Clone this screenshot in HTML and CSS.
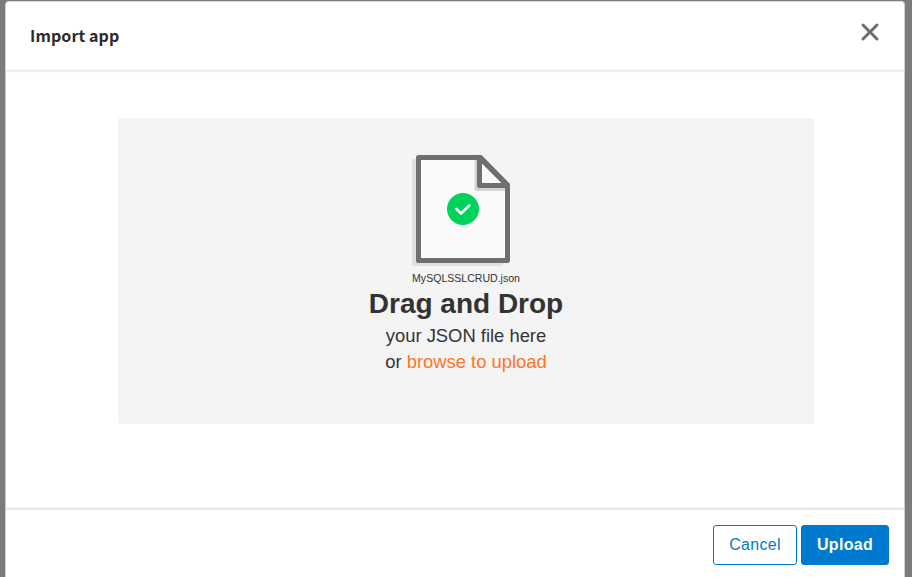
FILE: index.html
```html
<!DOCTYPE html>
<html lang="en">
<head>
<meta charset="utf-8">
<title>Import app</title>
<link rel="stylesheet" href="styles.css">
</head>
<body>
<div class="modal">
  <header class="modal-header">
    <h1 class="title">Import app</h1>
    <svg class="close" width="20" height="20" viewBox="0 0 20 20"><path d="M3 3L17 17M17 3L3 17"/></svg>
  </header>
  <main class="modal-body">
    <div class="dropzone">
      <svg class="file-icon" width="104" height="116" viewBox="0 0 104 116">
        <path class="shade" d="M5 6H60V50H93V110Q93 113 90 113H5Q2 113 2 110V9Q2 6 5 6Z"/>
        <path class="page" d="M8.500 4.500H70.500L97.500 32V107.500H8.500Z"/>
        <path class="fold-shade" d="M67 7V35.500H95"/>
        <path class="fold" d="M69.500 4.500V32.500H97.500Z"/>
        <path class="outline" d="M8.500 4.500H70.500L97.500 32V107.500H8.500Z"/>
        <circle class="badge" cx="53" cy="56" r="16"/>
        <path class="check" d="M46.500 56L51 60.500L59.300 52.500"/>
      </svg>
      <div class="filename">MySQLSSLCRUD.json</div>
      <div class="heading">Drag and Drop</div>
      <div class="hint">your JSON file here</div>
      <div class="hint">or <span class="browse">browse to upload</span></div>
    </div>
  </main>
  <footer class="modal-footer">
    <button class="button">Cancel</button>
    <button class="button primary">Upload</button>
  </footer>
</div>
</body>
</html>
```
FILE: styles.css
```css
* { box-sizing: border-box; }
body {
  margin: 0;
  height: 577px;
  padding: 1px 7px 0 5px;
  overflow: hidden;
  background: #7b7b7b;
  font-family: "Liberation Sans", Arial, sans-serif;
  color: #333;
}
.modal {
  height: 590px;
  display: flex;
  flex-direction: column;
  background: #fff;
  border: 1px solid #c8c8c8;
  border-top-color: #ddd;
  border-radius: 4px;
}
.modal-header {
  height: 69px;
  flex: none;
  display: flex;
  justify-content: space-between;
  padding: 20px 24px 0;
  border-bottom: 1px solid #e9e9e9;
  box-shadow: 0 1px 1px #f2f2f2;
}
.title {
  margin: 1px 0 0;
  font: bold 16px/24px "Noto Sans CJK SC", "Noto Sans", sans-serif;
  letter-spacing: 0.100px;
  color: #2b2b2b;
}
.close { fill: none; stroke: #6d6d6d; stroke-width: 3; stroke-linecap: round; }
.modal-body { height: 437px; flex: none; padding: 47px 90px 0 112px; }
.dropzone {
  height: 306px;
  padding-top: 36px;
  display: flex;
  flex-direction: column;
  align-items: center;
  border-radius: 2px;
  background: #f4f4f4;
}
.file-icon { flex: none; margin-top: -1px; margin-right: 8px; }
.shade { fill: #e1e0e0; }
.page { fill: #fafafa; }
.outline { fill: none; stroke: #6f6f6f; stroke-width: 5; stroke-linejoin: round; }
.fold-shade { fill: none; stroke: #d5d1d1; stroke-width: 5; stroke-linejoin: round; }
.fold { fill: #fafafa; stroke: #6f6f6f; stroke-width: 5; stroke-linejoin: round; }
.badge { fill: #00d35b; }
.check { fill: none; stroke: #fff; stroke-width: 2.600; stroke-linecap: round; stroke-linejoin: round; }
.filename { font-size: 10.560px; line-height: 16px; margin-top: 1px; }
.heading { font-size: 28px; font-weight: bold; line-height: 36px; }
.hint { font-size: 18.400px; line-height: 26px; position: relative; top: 1px; }
.browse { color: #ff7426; }
.modal-footer {
  flex: 1;
  display: flex;
  justify-content: flex-end;
  gap: 4px;
  padding: 15px 15px 0;
  border-top: 2px solid #e9e9e9;
  box-shadow: 0 -1px 1px #f5f5f5;
}
.button {
  width: 84px;
  height: 40px;
  padding: 0;
  font: 16px "Liberation Sans", Arial, sans-serif;
  letter-spacing: 0.300px;
  color: #007ace;
  background: #fff;
  border: 1px solid #007ace;
  border-radius: 3px;
}
.primary { width: 88px; color: #fff; background: #007ace; font-weight: bold; }
```
